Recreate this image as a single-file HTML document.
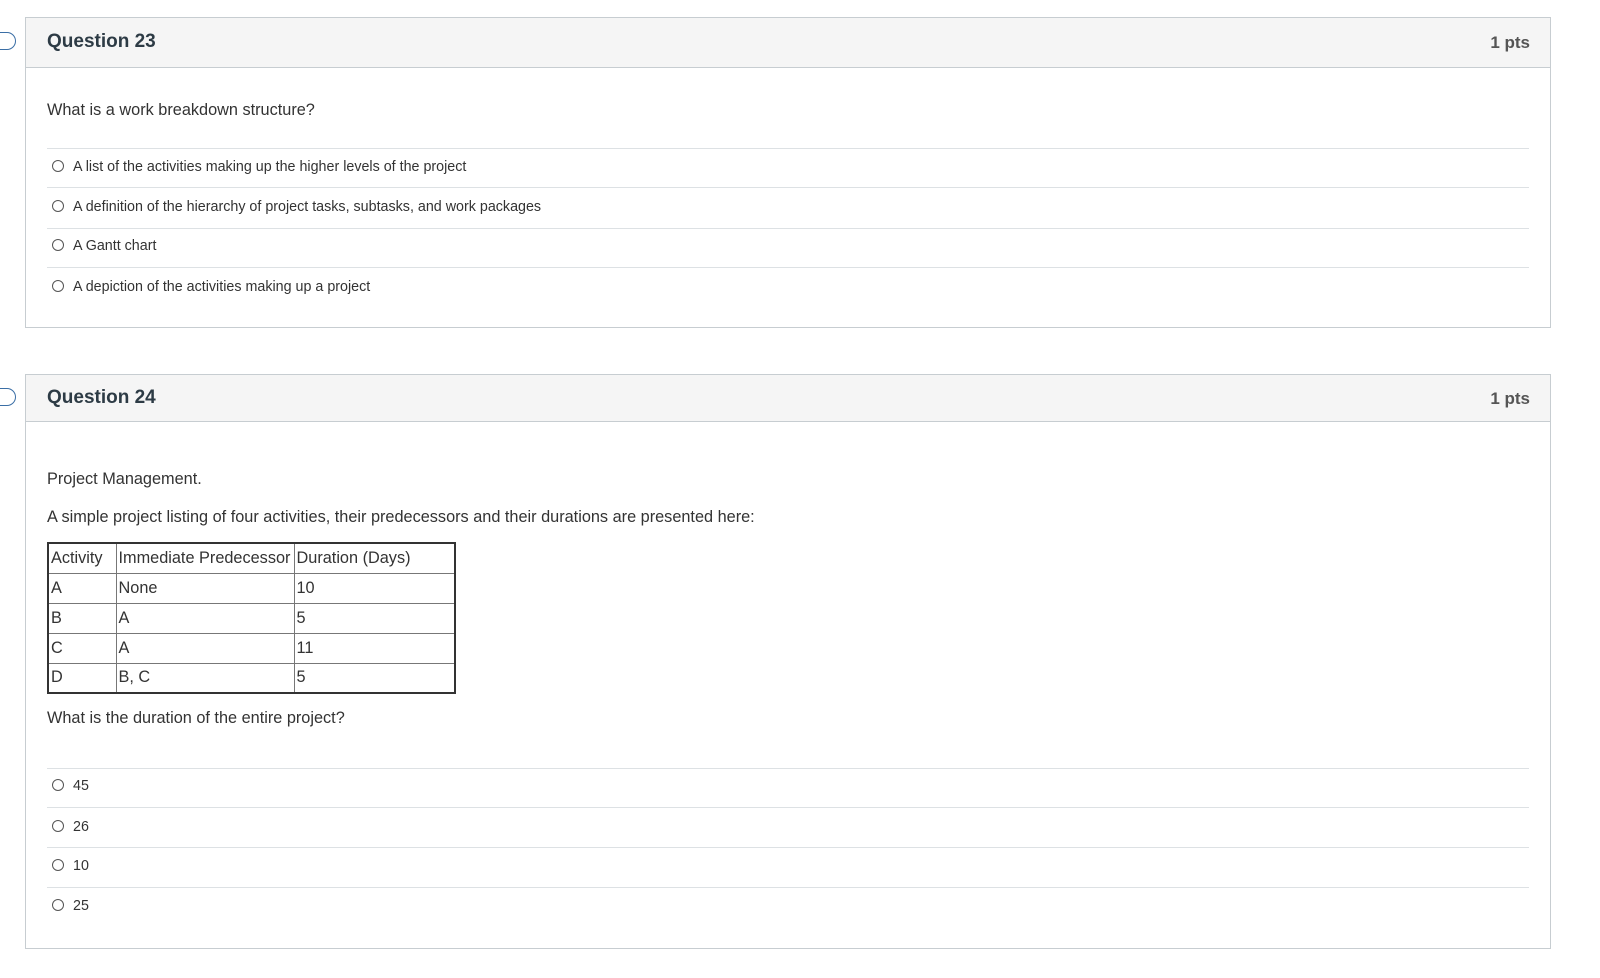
<!DOCTYPE html>
<html><head><meta charset="utf-8"><style>
*{margin:0;padding:0;box-sizing:border-box}
body{width:1600px;height:978px;background:#fff;font-family:"Liberation Sans",sans-serif;color:#2d3b45;position:relative;overflow:hidden}
.box{position:absolute;left:25px;width:1526px;border:1px solid #c7cdd1}
.hdr{position:absolute;left:0;top:0;right:0;background:#f5f5f5;border-bottom:1px solid #c7cdd1}
.qt{position:absolute;left:21px;font-size:19px;font-weight:bold;color:#2d3b45}
.pts{position:absolute;right:20px;font-size:17px;font-weight:bold;color:#555}
.t{position:absolute;left:47px;font-size:16.3px;color:#333}
.line{position:absolute;left:47px;width:1482px;border-top:1px solid #dde1e4}
.opt{position:absolute;left:52px;font-size:14.3px;color:#333;white-space:nowrap}
.opt span.r{display:inline-block;width:12px;height:12px;border:1.5px solid #555;border-radius:50%;vertical-align:-1px;margin-right:9px}
.tab{position:absolute;left:-6px;width:22px;height:18px;border:1.5px solid #3a6ea5;border-radius:0 9px 9px 0;background:#fff}
table{position:absolute;left:47px;top:542px;border-collapse:collapse;border:2px solid #333;font-size:16.3px;color:#333}
td{border:1px solid #777;height:30px;padding:0 2px;vertical-align:middle;white-space:nowrap}
</style></head><body>
<div class="tab" style="top:32px"></div>
<div class="tab" style="top:388px"></div>

<div class="box" style="top:17px;height:311px">
 <div class="hdr" style="height:50px"><div class="qt" style="top:13px">Question 23</div><div class="pts" style="top:15px">1 pts</div></div>
</div>
<div class="t" style="top:101px">What is a work breakdown structure?</div>
<div class="line" style="top:148px"></div>
<div class="opt" style="top:159px"><span class="r"></span>A list of the activities making up the higher levels of the project</div>
<div class="line" style="top:187px"></div>
<div class="opt" style="top:199px"><span class="r"></span>A definition of the hierarchy of project tasks, subtasks, and work packages</div>
<div class="line" style="top:228px"></div>
<div class="opt" style="top:238px"><span class="r"></span>A Gantt chart</div>
<div class="line" style="top:267px"></div>
<div class="opt" style="top:279px"><span class="r"></span>A depiction of the activities making up a project</div>

<div class="box" style="top:374px;height:575px">
 <div class="hdr" style="height:47px"><div class="qt" style="top:12px">Question 24</div><div class="pts" style="top:14px">1 pts</div></div>
</div>
<div class="t" style="top:470px">Project Management.</div>
<div class="t" style="top:508px">A simple project listing of four activities, their predecessors and their durations are presented here:</div>
<table>
<tr><td style="width:68px">Activity</td><td style="width:178px">Immediate Predecessor</td><td style="width:161px">Duration (Days)</td></tr>
<tr><td>A</td><td>None</td><td>10</td></tr>
<tr><td>B</td><td>A</td><td>5</td></tr>
<tr><td>C</td><td>A</td><td>11</td></tr>
<tr><td>D</td><td>B, C</td><td>5</td></tr>
</table>
<div class="t" style="top:709px">What is the duration of the entire project?</div>
<div class="line" style="top:768px"></div>
<div class="opt" style="top:778px"><span class="r"></span>45</div>
<div class="line" style="top:807px"></div>
<div class="opt" style="top:819px"><span class="r"></span>26</div>
<div class="line" style="top:847px"></div>
<div class="opt" style="top:858px"><span class="r"></span>10</div>
<div class="line" style="top:887px"></div>
<div class="opt" style="top:898px"><span class="r"></span>25</div>
</body></html>
